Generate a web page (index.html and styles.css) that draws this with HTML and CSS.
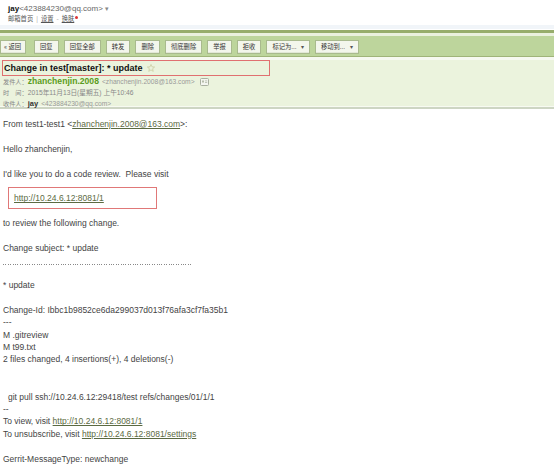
FILE: index.html
```html
<!DOCTYPE html>
<html>
<head>
<meta charset="utf-8">
<link rel="stylesheet" href="styles.css">
</head>
<body>
<div class="top">
  <div class="acct"><b>jay</b><span class="mail">&lt;423884230@qq.com&gt;</span><span class="caret">▾</span></div>
  <div class="links"><span>邮箱首页</span><span class="sep">|</span><span class="u">设置</span><span class="sep">-</span><span class="u">换肤</span><span class="dot"></span></div>
</div>
<div class="sep-a"></div>
<div class="sep-b"></div>
<div class="sep-c"></div>
<div class="toolbar">
  <span class="btn back">« 返回</span>
  <span class="btn">回复</span>
  <span class="btn">回复全部</span>
  <span class="btn">转发</span>
  <span class="btn">删除</span>
  <span class="btn">彻底删除</span>
  <span class="btn">举报</span>
  <span class="btn">拒收</span>
  <span class="btn menu">标记为... <i>▾</i></span>
  <span class="btn menu">移动到... <i>▾</i></span>
</div>
<div class="gap"></div>
<div class="head">
  <div class="subject-box"><span class="subject">Change in test[master]: * update</span><svg class="star" width="8" height="8" viewBox="0 0 10 10"><path d="M5 0.6 L6.3 3.6 L9.5 3.8 L7 5.9 L7.8 9.2 L5 7.4 L2.2 9.2 L3 5.9 L0.5 3.8 L3.7 3.6 Z" fill="none" stroke="#c8c89a" stroke-width="0.9"/></svg></div>
  <div class="meta"><span class="lbl">发件人：</span><b class="from">zhanchenjin.2008</b><span class="addr">&lt;zhanchenjin.2008@163.com&gt;</span><svg class="card" width="9" height="8" viewBox="0 0 9 8"><rect x="0.5" y="0.5" width="8" height="7" rx="1" fill="#f4f6f0" stroke="#a9b0a0"/><rect x="2" y="2.5" width="2" height="2" fill="#b5bcaa"/><rect x="5" y="2.5" width="2.2" height="0.8" fill="#b5bcaa"/><rect x="5" y="4.2" width="2.2" height="0.8" fill="#b5bcaa"/></svg></div>
  <div class="meta"><span class="lbl">时　间：</span><span class="val">2015年11月13日(星期五) 上午10:46</span></div>
  <div class="meta"><span class="lbl">收件人：</span><b class="to">jay</b><span class="addr">&lt;423884230@qq.com&gt;</span></div>
</div>
<div class="rule1"></div>
<div class="rule2"></div>
<div class="content">
  <div class="ln">From test1-test1 &lt;<a>zhanchenjin.2008@163.com</a>&gt;:</div>
  <div class="ln"></div>
  <div class="ln">Hello zhanchenjin,</div>
  <div class="ln"></div>
  <div class="ln">I'd like you to do a code review.&nbsp; Please visit</div>
  <div class="ln"></div>
  <div class="ln indent mark"><a>http://10.24.6.12:8081/1</a></div>
  <div class="ln"></div>
  <div class="ln">to review the following change.</div>
  <div class="ln"></div>
  <div class="ln">Change subject: * update</div>
  <div class="ln"><span class="dots"></span></div>
  <div class="ln"></div>
  <div class="ln">* update</div>
  <div class="ln"></div>
  <div class="ln">Change-Id: Ibbc1b9852ce6da299037d013f76afa3cf7fa35b1</div>
  <div class="ln">---</div>
  <div class="ln">M .gitreview</div>
  <div class="ln">M t99.txt</div>
  <div class="ln">2 files changed, 4 insertions(+), 4 deletions(-)</div>
  <div class="ln"></div>
  <div class="ln"></div>
  <div class="ln indent-sm">git pull ssh://10.24.6.12:29418/test refs/changes/01/1/1</div>
  <div class="ln">--</div>
  <div class="ln">To view, visit <a>http://10.24.6.12:8081/1</a></div>
  <div class="ln">To unsubscribe, visit <a>http://10.24.6.12:8081/settings</a></div>
  <div class="ln"></div>
  <div class="ln">Gerrit-MessageType: newchange</div>
</div>
</body>
</html>
```
FILE: styles.css
```css
* { box-sizing: border-box; }
html, body { margin: 0; padding: 0; background: #fff; }
body {
  width: 554px;
  height: 467px;
  overflow: hidden;
  font-family: "Liberation Sans", "Noto Sans CJK SC", sans-serif;
  color: #333;
}
.top { height: 25px; padding: 4px 0 0 8px; }
.acct { font-size: 8px; line-height: 10px; color: #222; white-space: nowrap; }
.acct b { font-weight: bold; color: #111; }
.acct .mail { color: #666; }
.acct .caret { color: #888; font-size: 7px; margin-left: 2px; }
.links { font-family: "Noto Sans CJK SC", sans-serif; font-size: 6.3px; line-height: 10px; color: #555; display: flex; align-items: center; white-space: nowrap; }
.links .sep { margin: 0 3px; color: #999; }
.links .u { text-decoration: underline; }
.links .dot { width: 3px; height: 3px; border-radius: 50%; background: #d33; margin-left: 1px; align-self: flex-start; margin-top: 2px; }
.sep-a { height: 4px; background: #f1f5f9; }
.sep-b { height: 1px; background: #fff; }
.sep-c { height: 3px; background: #97ad6c; }
.toolbar {
  height: 24px;
  border-top: 3px solid #eaf1de;
  border-bottom: 1px solid #9fb479;
  background: #bdd59c;
  display: flex;
  align-items: flex-start;
  padding: 4px 0 0 0;
  gap: 5px;
}
.btn {
  height: 14px;
  padding: 0 5px;
  background: #f3f6ec;
  border: 1px solid #a9ba8e;
  box-shadow: inset 0 -1px 0 #e2e8d6;
  font-family: "Noto Sans CJK SC", sans-serif;
  font-size: 6.3px;
  line-height: 12px;
  color: #333;
  white-space: nowrap;
}
.btn.back { padding: 0 4px 0 3px; margin-right: 3px; }
.btn.menu i { font-style: normal; font-size: 6px; margin-left: 3px; color: #555; }
.gap { height: 3px; background: #f6f9f0; }
.head { height: 46px; background: #ebf3dd; padding: 0 0 0 2px; }
.subject-box {
  width: 268px;
  height: 16px;
  border: 1px solid #e07070;
  display: flex;
  align-items: center;
  padding-left: 1px;
}
.subject { font-weight: bold; font-size: 9px; color: #111; white-space: nowrap; }
.star { margin-left: 4px; }
.meta { font-size: 6.7px; line-height: 11px; color: #888; padding-left: 1px; display: flex; align-items: center; white-space: nowrap; }
.meta .lbl { font-family: "Noto Sans CJK SC", sans-serif; font-size: 6.2px; color: #888; }
.meta .from { font-size: 8.6px; color: #5a9c20; font-weight: bold; margin-right: 3px; }
.meta .to { font-size: 7.5px; color: #333; font-weight: bold; margin-right: 3px; }
.meta .addr { color: #999; }
.meta .val { color: #888; font-family: "Liberation Sans", "Noto Sans CJK SC", sans-serif; }
.card { margin-left: 5px; }
.rule1 { height: 1px; background: #f7faf1; }
.rule2 { height: 2px; background: #cdd5c3; }
.content {
  padding: 9px 0 0 3px;
  font-family: "Liberation Sans", sans-serif;
  font-size: 8.5px;
  color: #444;
}
.ln { height: 12.4px; line-height: 12.4px; white-space: pre; position: relative; }
.ln a { color: #5b6a42; text-decoration: underline; }
.indent { padding-left: 11px; }
.indent-sm { padding-left: 5px; }
.mark::before {
  content: "";
  position: absolute;
  left: 5px;
  top: -5px;
  width: 147px;
  height: 20px;
  border: 1px solid #e07878;
}
.dots {
  display: inline-block;
  width: 189px;
  height: 1px;
  vertical-align: -2px;
  background: repeating-linear-gradient(90deg, #888 0 1px, transparent 1px 2.4px);
}
```
